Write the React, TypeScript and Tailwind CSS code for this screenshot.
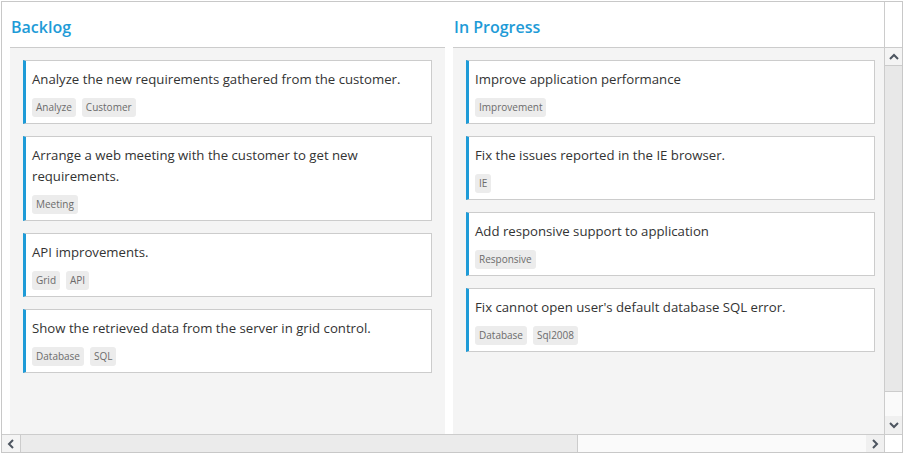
import React from 'react';

type Card = { text: string; tags: string[] };

const columns: { title: string; cards: Card[] }[] = [
  {
    title: 'Backlog',
    cards: [
      { text: 'Analyze the new requirements gathered from the customer.', tags: ['Analyze', 'Customer'] },
      { text: 'Arrange a web meeting with the customer to get new requirements.', tags: ['Meeting'] },
      { text: 'API improvements.', tags: ['Grid', 'API'] },
      { text: 'Show the retrieved data from the server in grid control.', tags: ['Database', 'SQL'] },
    ],
  },
  {
    title: 'In Progress',
    cards: [
      { text: 'Improve application performance', tags: ['Improvement'] },
      { text: 'Fix the issues reported in the IE browser.', tags: ['IE'] },
      { text: 'Add responsive support to application', tags: ['Responsive'] },
      { text: "Fix cannot open user's default database SQL error.", tags: ['Database', 'Sql2008'] },
    ],
  },
];

function Chevron({ dir }: { dir: 'up' | 'down' | 'left' | 'right' }) {
  const points = {
    up: '1,6 5,2 9,6',
    down: '1,2 5,6 9,2',
    left: '6,1 2,5 6,9',
    right: '2,1 6,5 2,9',
  }[dir];
  const size = dir === 'up' || dir === 'down' ? { w: 10, h: 8 } : { w: 8, h: 10 };
  return (
    <svg width={size.w} height={size.h} viewBox={`0 0 ${size.w} ${size.h}`} fill="none">
      <polyline points={points} stroke="#4d5560" strokeWidth={2} />
    </svg>
  );
}

function KanbanCard({ card }: { card: Card }) {
  return (
    <div className="bg-white border border-[#cccccc] border-l-[3px] border-l-[#1e9bd7] pl-[6px] pr-2 pt-[8px] pb-[6px]">
      <div className="text-[13.2px] leading-[21px] text-[#333333]">{card.text}</div>
      <div className="flex gap-[6px] mt-[8px]">
        {card.tags.map((tag) => (
          <span
            key={tag}
            className="h-[19px] px-[4px] rounded-[3px] bg-[#ececec] text-[10px] leading-[19px] text-[#6b6b6b]"
          >
            {tag}
          </span>
        ))}
      </div>
    </div>
  );
}

export default function App() {
  return (
    <div className="m-[1px] w-[902px] h-[452px] border border-[#c8c8c8] bg-white flex flex-col font-['Open_Sans',sans-serif] overflow-hidden">
      <div className="flex flex-1 min-h-0">
        {/* Board */}
        <div className="flex-1 min-w-0 overflow-hidden flex flex-col">
          <div className="h-[46px] flex gap-2 pl-2 shrink-0">
            {columns.map((col) => (
              <div
                key={col.title}
                className="w-[435px] shrink-0 border-b border-[#cccccc] flex items-end pb-[9px] pl-[1px]"
              >
                <span className="text-[16px] leading-[22px] font-semibold text-[#1e9bd7]">{col.title}</span>
              </div>
            ))}
          </div>
          <div className="flex-1 flex gap-2 pl-2 min-h-0">
            {columns.map((col) => (
              <div key={col.title} className="w-[435px] shrink-0 bg-[#f4f4f4] px-[13px] pt-3 flex flex-col gap-3">
                {col.cards.map((card) => (
                  <KanbanCard key={card.text} card={card} />
                ))}
              </div>
            ))}
          </div>
        </div>

        {/* Vertical scrollbar */}
        <div className="w-[18px] border-l border-[#cccccc] flex flex-col shrink-0">
          <div className="h-[46px] border-b border-[#cccccc] bg-white" />
          <div className="h-[18px] border-b border-[#cccccc] bg-[#f4f4f4] flex items-center justify-center">
            <Chevron dir="up" />
          </div>
          <div className="h-[326px] border-b border-[#cccccc] bg-[#e8e8e8]" />
          <div className="flex-1 bg-[#fafafa]" />
          <div className="h-[18px] bg-[#f0f0f0] flex items-center justify-center">
            <Chevron dir="down" />
          </div>
        </div>
      </div>

      {/* Horizontal scrollbar */}
      <div className="h-[18px] border-t border-[#cccccc] flex shrink-0">
        <div className="w-[19px] border-r border-[#cccccc] bg-[#f4f4f4] flex items-center justify-center">
          <Chevron dir="left" />
        </div>
        <div className="w-[557px] border-r border-[#cccccc] bg-[#ebebeb]" />
        <div className="flex-1 bg-[#fafafa]" />
        <div className="w-[18px] bg-[#f0f0f0] flex items-center justify-center">
          <Chevron dir="right" />
        </div>
        <div className="w-[18px] border-l border-[#cccccc] bg-white" />
      </div>
    </div>
  );
}
